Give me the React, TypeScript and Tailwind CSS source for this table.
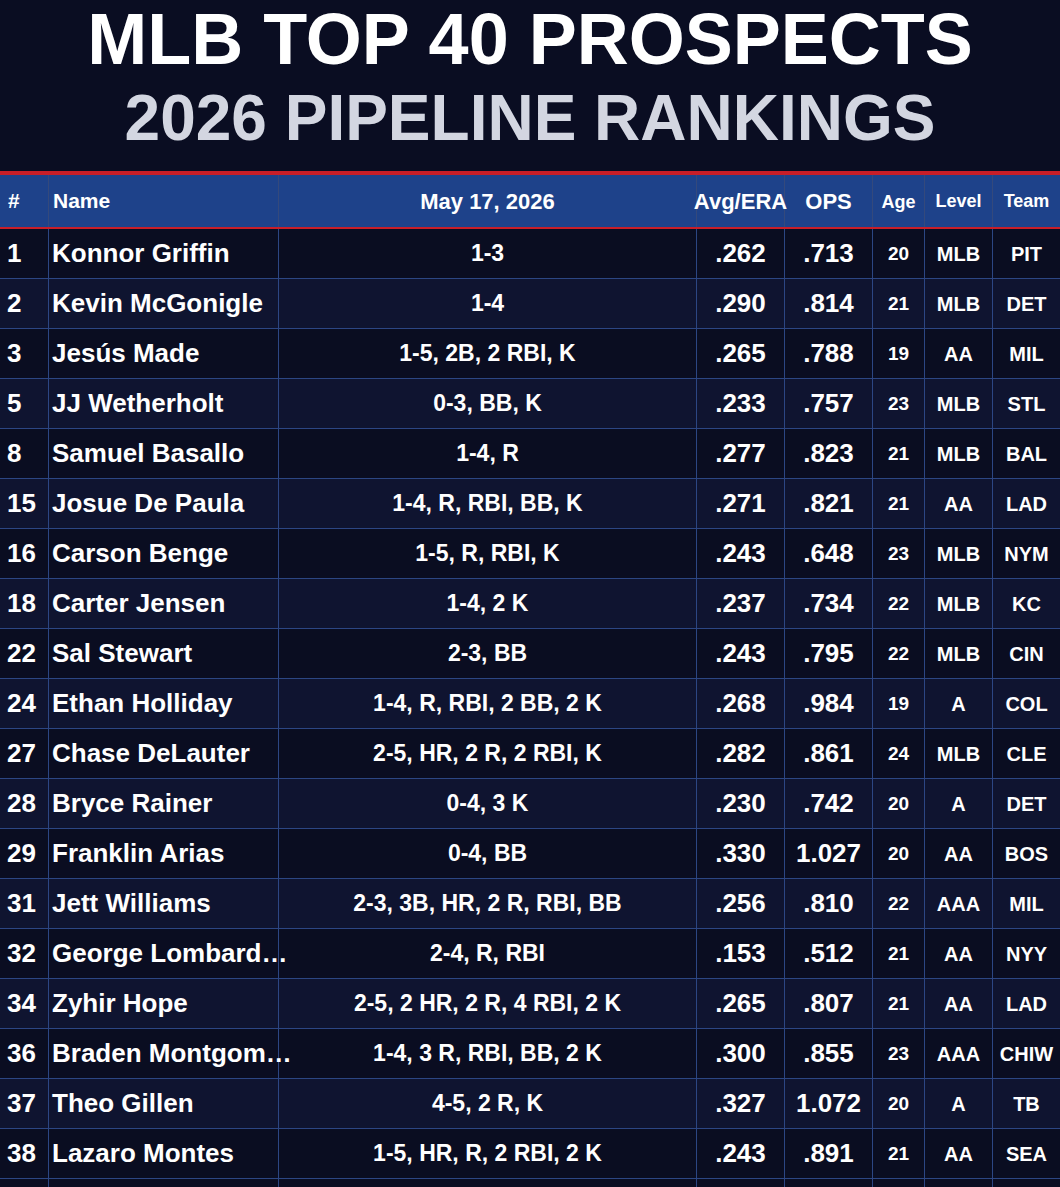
const cols = "grid grid-cols-[49px_230px_418px_88px_88px_52px_68px_67px]";

type Row = [string, string, string, string, string, string, string, string];

const rows: Row[] = [
  ["1", "Konnor Griffin", "1-3", ".262", ".713", "20", "MLB", "PIT"],
  ["2", "Kevin McGonigle", "1-4", ".290", ".814", "21", "MLB", "DET"],
  ["3", "Jesús Made", "1-5, 2B, 2 RBI, K", ".265", ".788", "19", "AA", "MIL"],
  ["5", "JJ Wetherholt", "0-3, BB, K", ".233", ".757", "23", "MLB", "STL"],
  ["8", "Samuel Basallo", "1-4, R", ".277", ".823", "21", "MLB", "BAL"],
  ["15", "Josue De Paula", "1-4, R, RBI, BB, K", ".271", ".821", "21", "AA", "LAD"],
  ["16", "Carson Benge", "1-5, R, RBI, K", ".243", ".648", "23", "MLB", "NYM"],
  ["18", "Carter Jensen", "1-4, 2 K", ".237", ".734", "22", "MLB", "KC"],
  ["22", "Sal Stewart", "2-3, BB", ".243", ".795", "22", "MLB", "CIN"],
  ["24", "Ethan Holliday", "1-4, R, RBI, 2 BB, 2 K", ".268", ".984", "19", "A", "COL"],
  ["27", "Chase DeLauter", "2-5, HR, 2 R, 2 RBI, K", ".282", ".861", "24", "MLB", "CLE"],
  ["28", "Bryce Rainer", "0-4, 3 K", ".230", ".742", "20", "A", "DET"],
  ["29", "Franklin Arias", "0-4, BB", ".330", "1.027", "20", "AA", "BOS"],
  ["31", "Jett Williams", "2-3, 3B, HR, 2 R, RBI, BB", ".256", ".810", "22", "AAA", "MIL"],
  ["32", "George Lombard…", "2-4, R, RBI", ".153", ".512", "21", "AA", "NYY"],
  ["34", "Zyhir Hope", "2-5, 2 HR, 2 R, 4 RBI, 2 K", ".265", ".807", "21", "AA", "LAD"],
  ["36", "Braden Montgom…", "1-4, 3 R, RBI, BB, 2 K", ".300", ".855", "23", "AAA", "CHIW"],
  ["37", "Theo Gillen", "4-5, 2 R, K", ".327", "1.072", "20", "A", "TB"],
  ["38", "Lazaro Montes", "1-5, HR, R, 2 RBI, 2 K", ".243", ".891", "21", "AA", "SEA"],
];

const cell = "flex items-center border-r border-[#2c4683] whitespace-nowrap";

function DataRow({ r, i }: { r: Row; i: number }) {
  const bg = i % 2 === 0 ? "bg-[#0a0d21]" : "bg-[#0f1430]";
  return (
    <div className={`${cols} h-[50px] border-b border-[#2c4683] font-bold text-white ${bg}`}>
      <div className={`${cell} pl-[7px] text-[26px]`}>{r[0]}</div>
      <div className={`${cell} pl-[3px] text-[26px]`}>{r[1]}</div>
      <div className={`${cell} justify-center text-[23px]`}>{r[2]}</div>
      <div className={`${cell} justify-center text-[26px]`}>{r[3]}</div>
      <div className={`${cell} justify-center text-[26px]`}>{r[4]}</div>
      <div className={`${cell} justify-center pt-[2px] text-[19px]`}>{r[5]}</div>
      <div className={`${cell} justify-center text-[20px]`}>{r[6]}</div>
      <div className="flex items-center justify-center whitespace-nowrap text-[20px]">{r[7]}</div>
    </div>
  );
}

export default function App() {
  const head = "flex items-center border-r border-[#34497c] whitespace-nowrap";
  return (
    <div className="h-[1187px] w-[1060px] overflow-hidden bg-[#0a0d22] font-['Liberation_Sans',Arial,sans-serif]">
      {/* title */}
      <div className="flex h-[171px] flex-col items-center font-bold">
        <h1 className="-mt-[2px] text-[72px] leading-[82px] text-white">MLB TOP 40 PROSPECTS</h1>
        <h2 className="mt-[1px] text-[64px] leading-[74px] text-[#d3d6e1]">2026 PIPELINE RANKINGS</h2>
      </div>

      {/* column header */}
      <div className={`${cols} h-[58px] border-t-4 border-b-2 border-[#c81e28] bg-[#1e428a] font-bold text-white`}>
        <div className={`${head} pl-[8px] text-[21px]`}>#</div>
        <div className={`${head} pl-[4px] text-[21px]`}>Name</div>
        <div className={`${head} justify-center text-[22px]`}>May 17, 2026</div>
        <div className={`${head} justify-center text-[22px]`}>Avg/ERA</div>
        <div className={`${head} justify-center text-[22px]`}>OPS</div>
        <div className={`${head} justify-center pt-[2px] text-[18px]`}>Age</div>
        <div className={`${head} justify-center text-[18px]`}>Level</div>
        <div className="flex items-center justify-center text-[18px]">Team</div>
      </div>

      {rows.map((r, i) => (
        <DataRow key={r[0]} r={r} i={i} />
      ))}
      <div className={`${cols} h-[50px] bg-[#0a0d21]`}>
        {Array.from({ length: 7 }).map((_, k) => (
          <div key={k} className="border-r border-[#2c4683]" />
        ))}
        <div />
      </div>
    </div>
  );
}
